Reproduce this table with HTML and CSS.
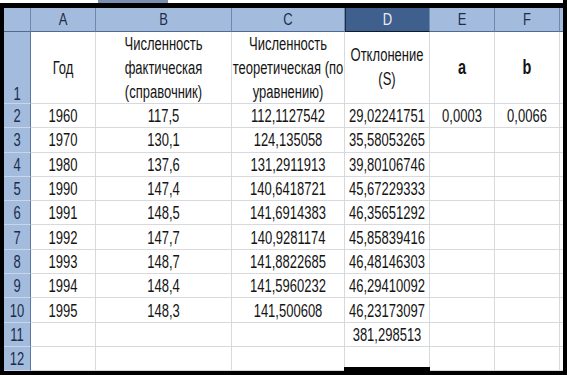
FILE: index.html
```html
<!DOCTYPE html>
<html>
<head>
<meta charset="utf-8">
<link rel="stylesheet" href="styles.css">
</head>
<body>
<div class="screen">
  <div class="topstrip"><div class="seg-white"></div><div class="seg-blue"></div><div class="seg-white grow"></div></div>
  <div class="sheet">
    <div class="ch corner"></div>
    <div class="ch"><span class="t">A</span></div>
    <div class="ch"><span class="t">B</span></div>
    <div class="ch"><span class="t">C</span></div>
    <div class="ch sel"><span class="t">D</span></div>
    <div class="ch"><span class="t">E</span></div>
    <div class="ch"><span class="t">F</span></div>
    <div class="ch sliver"></div>

    <div class="rh bottom"><span class="t">1</span></div>
    <div class="c"><span class="t">Год</span></div>
    <div class="c"><span class="t ml">Численность<br>фактическая<br>(справочник)</span></div>
    <div class="c"><span class="t ml">Численность<br>теоретическая (по<br>уравнению)</span></div>
    <div class="c"><span class="t ml">Отклонение<br>(S)</span></div>
    <div class="c"><span class="t b">a</span></div>
    <div class="c"><span class="t b">b</span></div>
    <div class="c sliver"></div>

    <div class="rh"><span class="t">2</span></div>
    <div class="c"><span class="t">1960</span></div>
    <div class="c"><span class="t">117,5</span></div>
    <div class="c"><span class="t">112,1127542</span></div>
    <div class="c"><span class="t">29,02241751</span></div>
    <div class="c"><span class="t">0,0003</span></div>
    <div class="c"><span class="t">0,0066</span></div>
    <div class="c sliver"></div>

    <div class="rh"><span class="t">3</span></div>
    <div class="c"><span class="t">1970</span></div>
    <div class="c"><span class="t">130,1</span></div>
    <div class="c"><span class="t">124,135058</span></div>
    <div class="c"><span class="t">35,58053265</span></div>
    <div class="c"></div>
    <div class="c"></div>
    <div class="c sliver"></div>

    <div class="rh"><span class="t">4</span></div>
    <div class="c"><span class="t">1980</span></div>
    <div class="c"><span class="t">137,6</span></div>
    <div class="c"><span class="t">131,2911913</span></div>
    <div class="c"><span class="t">39,80106746</span></div>
    <div class="c"></div>
    <div class="c"></div>
    <div class="c sliver"></div>

    <div class="rh"><span class="t">5</span></div>
    <div class="c"><span class="t">1990</span></div>
    <div class="c"><span class="t">147,4</span></div>
    <div class="c"><span class="t">140,6418721</span></div>
    <div class="c"><span class="t">45,67229333</span></div>
    <div class="c"></div>
    <div class="c"></div>
    <div class="c sliver"></div>

    <div class="rh"><span class="t">6</span></div>
    <div class="c"><span class="t">1991</span></div>
    <div class="c"><span class="t">148,5</span></div>
    <div class="c"><span class="t">141,6914383</span></div>
    <div class="c"><span class="t">46,35651292</span></div>
    <div class="c"></div>
    <div class="c"></div>
    <div class="c sliver"></div>

    <div class="rh"><span class="t">7</span></div>
    <div class="c"><span class="t">1992</span></div>
    <div class="c"><span class="t">147,7</span></div>
    <div class="c"><span class="t">140,9281174</span></div>
    <div class="c"><span class="t">45,85839416</span></div>
    <div class="c"></div>
    <div class="c"></div>
    <div class="c sliver"></div>

    <div class="rh"><span class="t">8</span></div>
    <div class="c"><span class="t">1993</span></div>
    <div class="c"><span class="t">148,7</span></div>
    <div class="c"><span class="t">141,8822685</span></div>
    <div class="c"><span class="t">46,48146303</span></div>
    <div class="c"></div>
    <div class="c"></div>
    <div class="c sliver"></div>

    <div class="rh"><span class="t">9</span></div>
    <div class="c"><span class="t">1994</span></div>
    <div class="c"><span class="t">148,4</span></div>
    <div class="c"><span class="t">141,5960232</span></div>
    <div class="c"><span class="t">46,29410092</span></div>
    <div class="c"></div>
    <div class="c"></div>
    <div class="c sliver"></div>

    <div class="rh"><span class="t">10</span></div>
    <div class="c"><span class="t">1995</span></div>
    <div class="c"><span class="t">148,3</span></div>
    <div class="c"><span class="t">141,500608</span></div>
    <div class="c"><span class="t">46,23173097</span></div>
    <div class="c"></div>
    <div class="c"></div>
    <div class="c sliver"></div>

    <div class="rh"><span class="t">11</span></div>
    <div class="c"></div>
    <div class="c"></div>
    <div class="c"></div>
    <div class="c"><span class="t">381,298513</span></div>
    <div class="c"></div>
    <div class="c"></div>
    <div class="c sliver"></div>

    <div class="rh"><span class="t">12</span></div>
    <div class="c"></div>
    <div class="c"></div>
    <div class="c"></div>
    <div class="c"></div>
    <div class="c"></div>
    <div class="c"></div>
    <div class="c sliver"></div>
  </div>
  <div class="tab"></div>
</div>
</body>
</html>
```

FILE: styles.css
```css
* { box-sizing: border-box; }
html, body { margin: 0; padding: 0; background: #000; }
.screen {
  position: relative;
  width: 567px;
  height: 375px;
  background: #000;
  overflow: hidden;
  font-family: "Liberation Sans", Arial, sans-serif;
}
.topstrip {
  display: flex;
  width: 563px;
  height: 3px;
}
.seg-white { width: 98px; background: #fff; }
.seg-blue { width: 70px; background: #7d8fb1; }
.grow { flex: 1; }
.sheet {
  margin: 5px 0 0 4px;
  width: 559px;
  display: grid;
  grid-template-columns: 27px 65px 136px 113px 85px 65px 65px 3px;
  grid-template-rows: 24px 72px repeat(11, 24.3px);
  background: #fff;
}
.t {
  display: inline-block;
  font-size: 13px;
  line-height: 15px;
  transform: scaleY(1.4);
  white-space: nowrap;
  text-align: center;
}
.ml { line-height: 17.1px; }
.b { font-weight: bold; font-size: 14.5px; }
.c {
  display: flex;
  align-items: center;
  justify-content: center;
  border-right: 1px solid #d8d9dc;
  border-bottom: 1px solid #d8d9dc;
  color: #141414;
  background: #fff;
}
.ch {
  display: flex;
  align-items: center;
  justify-content: center;
  background: #a3bcdd;
  color: #1d2d4c;
  border-right: 1px solid #6d89b1;
  border-bottom: 1px solid #4f6a93;
}
.ch .t { transform: scaleY(1.3); }
.ch.sel {
  background: #3f5f8d;
  color: #e9eef7;
  border-left: 1px solid #1c2b44;
  border-bottom: 1px solid #101a2a;
}
.corner { background: #a3bcdd; }
.rh {
  display: flex;
  align-items: center;
  justify-content: center;
  background: #a3bcdd;
  color: #1d2d4c;
  border-right: 1px solid #5b779f;
  border-bottom: 1px solid #c9d6e9;
}
.rh.bottom { align-items: flex-end; padding-bottom: 2px; }
.sliver { border-right: none; }
.ch.sliver { border-right: none; }
.tab {
  position: absolute;
  left: 344px;
  top: 367px;
  width: 86px;
  height: 8px;
  background: #000;
}
```
